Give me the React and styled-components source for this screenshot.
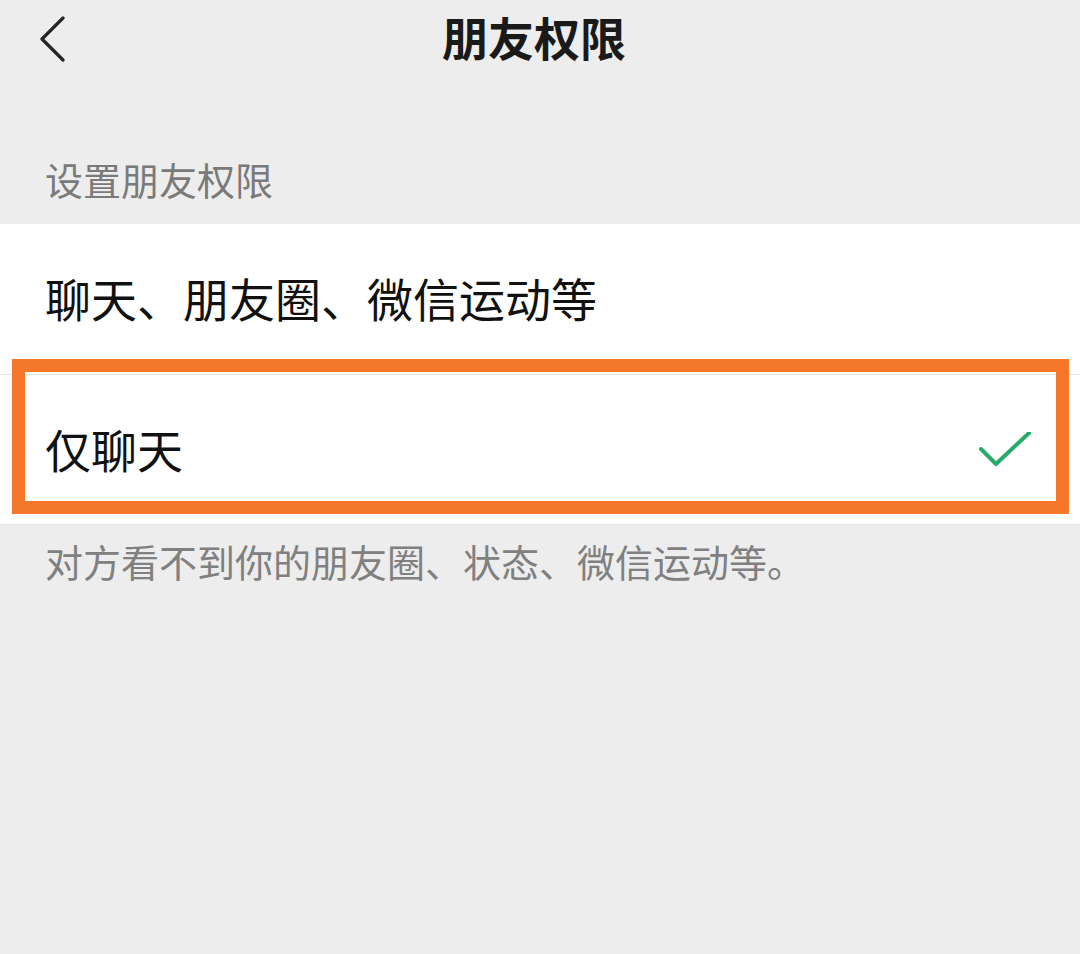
import React from "react";
import styled, { createGlobalStyle } from "styled-components";

const Global = createGlobalStyle`
  html, body { margin: 0; padding: 0; background: #ededed; }
  body {
    font-family: "Noto Sans CJK SC", "Noto Sans", sans-serif;
    -webkit-font-smoothing: antialiased;
  }
`;

const Page = styled.div`
  width: 1080px;
  height: 954px;
  background: #ededed;
  overflow: hidden;
`;

const NavBar = styled.header`
  height: 80px;
  display: grid;
  grid-template-columns: 1fr auto 1fr;
  align-items: center;
  padding: 0 0 0 40px;
`;

const BackButton = styled.button`
  justify-self: start;
  width: 26px;
  height: 50px;
  padding: 0;
  border: 0;
  background: none;
  display: flex;
  align-items: center;
  margin-top: -2px;
`;

const Title = styled.h1`
  margin: 0;
  font-size: 46px;
  line-height: 46px;
  font-weight: 700;
  color: #1a1a1a;
  letter-spacing: 0;
  transform: translate(-26px, -4px);
`;

const SectionLabel = styled.div`
  height: 144px;
  box-sizing: border-box;
  padding: 80px 45px 0;
  font-size: 38px;
  line-height: 38px;
  color: #7a7a7a;
`;

const Panel = styled.section`
  background: #ffffff;
  border-bottom: 1px solid #e2e2e2;
`;

const Row = styled.div`
  position: relative;
  height: 150px;
  box-sizing: border-box;
  display: flex;
  align-items: center;
  justify-content: space-between;
  padding: 0 48px 4px 45px;
  border-top: ${(p) => (p.$divider ? "1px solid #e6e6e6" : "0")};
`;

const RowText = styled.span`
  font-size: 46px;
  line-height: 46px;
  font-weight: 400;
  color: #111111;
`;

const Highlight = styled.div`
  position: absolute;
  top: -16px;
  left: 12px;
  right: 11px;
  bottom: 10px;
  border: 13px solid #f5782a;
  pointer-events: none;
`;

const Footnote = styled.p`
  margin: 0;
  padding: 17px 45px 0;
  font-size: 38px;
  line-height: 38px;
  color: #808080;
`;

const BackIcon = () => (
  <svg width="26" height="50" viewBox="0 0 26 50">
    <polyline
      points="23,4 2,25 23,46"
      fill="none"
      stroke="#262626"
      strokeWidth="3.2"
      strokeLinecap="round"
      strokeLinejoin="round"
    />
  </svg>
);

const CheckIcon = () => (
  <svg width="54" height="40" viewBox="0 0 54 40" style={{ marginTop: 8 }}>
    <polyline
      points="3,17 18,32 51,1"
      fill="none"
      stroke="#28ab6a"
      strokeWidth="4"
      strokeLinecap="round"
      strokeLinejoin="round"
    />
  </svg>
);

export default function App() {
  return (
    <>
      <Global />
      <Page>
        <NavBar>
          <BackButton aria-label="返回">
            <BackIcon />
          </BackButton>
          <Title>朋友权限</Title>
          <span />
        </NavBar>
        <SectionLabel>设置朋友权限</SectionLabel>
        <Panel>
          <Row>
            <RowText>聊天、朋友圈、微信运动等</RowText>
          </Row>
          <Row $divider>
            <RowText>仅聊天</RowText>
            <CheckIcon />
            <Highlight />
          </Row>
        </Panel>
        <Footnote>对方看不到你的朋友圈、状态、微信运动等。</Footnote>
      </Page>
    </>
  );
}
